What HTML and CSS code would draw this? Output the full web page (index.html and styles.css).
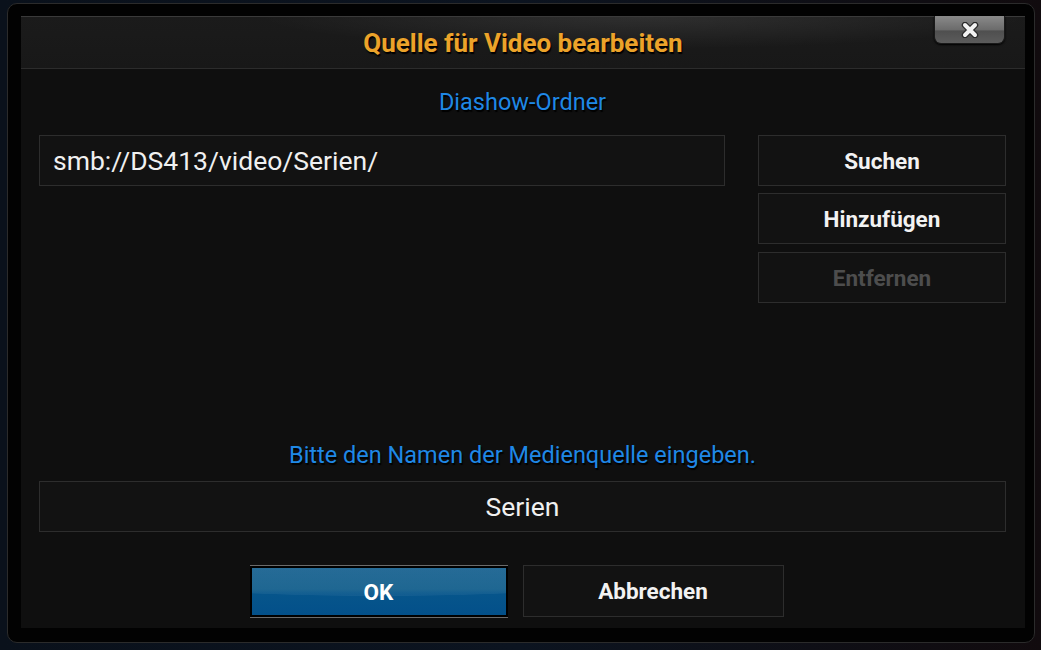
FILE: index.html
```html
<!DOCTYPE html>
<html lang="de">
<head>
  <meta charset="UTF-8">
  <title>Quelle für Video bearbeiten</title>
  <link rel="stylesheet" href="styles.css">
</head>
<body>

  <div class="frame">
    <div class="panel">
      <div class="titlebar">
        <h1>Quelle für Video bearbeiten</h1>
        <a href="#" class="close">
          <svg width="22" height="16" viewBox="0 0 22 16">
            <path d="M6 3 L16 13 M16 3 L6 13" stroke="#2a2a2a" stroke-width="6.5" stroke-linecap="round"/>
            <path d="M6 3 L16 13 M16 3 L6 13" stroke="#f2f2f2" stroke-width="4" stroke-linecap="round"/>
          </svg>
        </a>
      </div>

      <div class="label first">Diashow-Ordner</div>

      <div class="path-row">
        <div class="field path">smb://DS413/video/Serien/</div>
        <div class="side-buttons">
          <button class="btn">Suchen</button>
          <button class="btn">Hinzufügen</button>
          <button class="btn disabled">Entfernen</button>
        </div>
      </div>

      <div class="label second">Bitte den Namen der Medienquelle eingeben.</div>

      <div class="field name">Serien</div>

      <div class="actions">
        <button class="btn ok">OK</button>
        <button class="btn cancel">Abbrechen</button>
      </div>
    </div>
  </div>

</body>
</html>
```

FILE: styles.css
```css
body {
  margin: 0;
  height: 650px;
  overflow: hidden;
  background: linear-gradient(90deg, #0a111b 0%, #0c1420 50%, #110b0e 100%);
  font-family: Roboto, "Liberation Sans", sans-serif;
  color: #eee;
}
.frame {
  margin: 3px 0 0 7px;
  width: 1028px;
  height: 640px;
  box-sizing: border-box;
  padding: 12px 9px 14px 13px;
  background: #020202;
  border: 1px solid #2b2b2b;
  border-radius: 10px;
}
.panel {
  position: relative;
  height: 100%;
  background: #0f0f0f;
  padding: 0 19px 0 18px;
  display: flex;
  flex-direction: column;
}
.titlebar {
  height: 52px;
  margin: 0 -19px 0 -18px;
  border-bottom: 1px solid #2c2c2c;
  background:
    radial-gradient(ellipse 55% 90% at 62% 0%, rgba(255,255,255,0.09), rgba(255,255,255,0) 70%),
    linear-gradient(180deg, #1b1b1b 0%, #181818 100%);
  box-shadow: inset 0 1px 0 #3a3a3a;
  display: flex;
  align-items: center;
  justify-content: center;
}
h1 {
  margin: 0;
  padding-top: 1px;
  font-size: 26px;
  font-weight: bold;
  color: #eca32a;
  text-shadow: 1px 2px 1px #000;
}
.close {
  position: absolute;
  top: 0;
  right: 20px;
  width: 71px;
  height: 28px;
  box-sizing: border-box;
  border: 1px solid #1a1a1a;
  border-top: none;
  border-radius: 0 0 7px 7px;
  background: linear-gradient(180deg, #8a8a8a 0%, #6c6c6c 50%, #4f4f4f 56%, #5c5c5c 100%);
  box-shadow: 0 1px 2px #000;
  display: flex;
  align-items: center;
  justify-content: center;
}
.label {
  text-align: center;
  font-size: 23.5px;
  line-height: 24px;
  color: #1f88e6;
  text-shadow: 1px 2px 1px #000;
}
.label.first {
  margin-top: 21px;
}
.label.second {
  margin-top: 140px;
}
.field {
  box-sizing: border-box;
  height: 51px;
  border: 1px solid #2d2d2d;
  background: #121212;
  font-size: 26.5px;
  color: #f0f0f0;
  display: flex;
  align-items: center;
}
.path-row {
  margin-top: 21px;
  display: flex;
  gap: 33px;
  align-items: flex-start;
}
.path {
  width: 686px;
  padding-left: 13px;
}
.side-buttons {
  display: flex;
  flex-direction: column;
  width: 248px;
}
.btn {
  box-sizing: border-box;
  height: 51px;
  border: 1px solid #2d2d2d;
  background: #121212;
  color: #f2f2f2;
  font-family: inherit;
  font-size: 22.5px;
  font-weight: bold;
  cursor: pointer;
}
.side-buttons .btn + .btn {
  margin-top: 7px;
}
.side-buttons .btn.disabled {
  margin-top: 8px;
  color: #4d4d4d;
}
.name {
  margin-top: 14px;
  justify-content: center;
}
.actions {
  margin-top: 34px;
  display: flex;
  justify-content: center;
  gap: 15px;
  padding-right: 12px;
}
.ok {
  width: 258px;
  height: 51px;
  border: 2px solid #000;
  background:
    radial-gradient(ellipse 120% 60% at 50% 0%, rgba(255,255,255,0.05) 0%, rgba(255,255,255,0.05) 98%, rgba(255,255,255,0) 100%),
    linear-gradient(180deg, #1a6391 0%, #135f8c 45%, #06558b 55%, #03508a 100%);
  box-shadow: 0 -1px 0 rgba(200,200,200,0.5), 0 1px 0 rgba(200,200,200,0.5);
  color: #fff;
}
.cancel {
  width: 261px;
  height: 52px;
  margin-top: -1px;
}
```
